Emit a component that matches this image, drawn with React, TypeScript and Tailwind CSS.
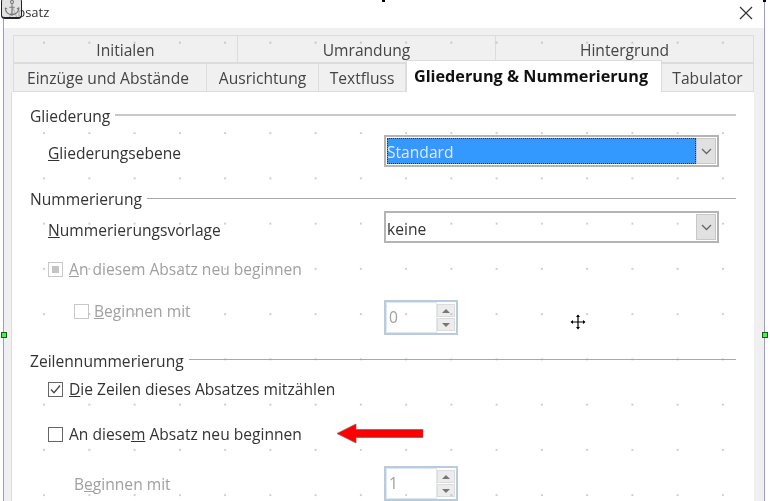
import React from 'react';
import { Anchor } from 'lucide-react';

const Heading = ({ title, line, text = 'pt-[4px]' }: { title: string; line: string; text?: string }) => (
  <div className="flex items-center h-5 gap-[5px]">
    <span className={`whitespace-nowrap ${text}`}>{title}</span>
    <div className={`flex-1 ${line}`} />
  </div>
);

const Select = ({ value, active }: { value: string; active?: boolean }) => (
  <div className="flex w-[335px] h-[32px] border-2 border-[#b4b4b4] bg-white p-px">
    <div className={`flex-1 flex items-center ${active ? 'pt-[4px] bg-[#3399ff] text-[#d9ecff] outline-1 outline-dotted outline-[#333] -outline-offset-1' : 'pt-[6px] text-[#333]'}`}>
      {value}
    </div>
    <div className="w-5 flex items-center justify-center bg-[#e1e1e1] border border-[#c8c8c8]">
      <svg width="11" height="7" viewBox="0 0 11 7">
        <path d="M1 1l4.500 4.500L10 1" stroke="#666" strokeWidth="1.300" fill="none" />
      </svg>
    </div>
  </div>
);

const Spin = ({ value }: { value: string }) => (
  <div className="flex w-[74px] h-[35px] border-2 border-[#b9cbdf] bg-white">
    <div className="flex-1 flex items-center pl-[2px] text-[#a0a0a0] border border-[#dbe9f5]">{value}</div>
    <div className="w-[18px] my-[2px] mr-[1px] flex flex-col gap-px">
      <div className="flex-1 flex items-center justify-center bg-[#ececec] border border-[#dcdcdc]">
        <div className="w-0 h-0 border-x-[4px] border-x-transparent border-b-[4px] border-b-[#777]" />
      </div>
      <div className="flex-1 flex items-center justify-center bg-[#ececec] border border-[#dcdcdc]">
        <div className="w-0 h-0 border-x-[4px] border-x-transparent border-t-[4px] border-t-[#777]" />
      </div>
    </div>
  </div>
);

const Tab = ({ label, className }: { label: string; className: string }) => (
  <div className={`flex items-center justify-center border border-[#dcdcdc] bg-[#f0f0f0] text-[#444] whitespace-nowrap ${className}`}>
    {label}
  </div>
);

export default function App() {
  return (
    <div className="relative w-[770px] h-[501px] overflow-hidden bg-white text-[#333] text-[15.6px] blur-[0.35px] font-['Open_Sans','Noto_Sans',sans-serif]">
      {/* titelleiste */}
      <div className="h-7 flex items-center justify-between pl-[9px] pr-[17px]">
        <span className="text-[13px] text-[#333] -mt-[2px]">Absatz</span>
        <svg width="14" height="14" viewBox="0 0 14 14" className="-mt-[3px]">
          <path d="M1 1l12 12M13 1L1 13" stroke="#333" strokeWidth="1.2" fill="none" />
        </svg>
      </div>

      <div className="ml-[4px] mr-[5px] h-[473px] bg-[#f0f0f0] pt-[7px]">
        {/* reiter */}
        <div className="flex h-[28px] ml-[9px] mr-[11px]">
          <Tab label="Initialen" className="w-[225px] pt-[4px]" />
          <Tab label="Umrandung" className="w-[258px] pt-[4px] border-l-0" />
          <Tab label="Hintergrund" className="flex-1 pt-[4px] border-l-0" />
        </div>
        <div className="flex h-[29px] ml-[9px] mr-[11px] relative z-10">
          <Tab label="Einzüge und Abstände" className="w-[194px] pt-[2px] pr-[4px]" />
          <Tab label="Ausrichtung" className="w-[112px] pt-[2px] border-l-0" />
          <Tab label="Textfluss" className="w-[87px] pt-[2px] border-l-0" />
          <div className="w-[256px] h-[32px] -mt-[3px] pr-[6px] flex items-center justify-center bg-white border border-b-0 border-[#dcdcdc] font-bold text-[16.2px] text-[#111] whitespace-nowrap">
            Gliederung &amp; Nummerierung
          </div>
          <Tab label="Tabulator" className="flex-1 pt-[2px] border-l-0" />
        </div>

        {/* seite */}
        <div className="ml-[7px] mr-[11px] h-[409px] bg-white border-l border-[#dcdcdc] pt-[14px] pl-[18px] pr-[18px]">
          <Heading title="Gliederung" text="pt-[2px]" line="h-[2px] -mt-[3px] bg-[#c8c8c8]" />
          <div className="mt-[9px] ml-[18px] flex items-center">
            <div className="w-[336px] pt-[6px]"><u>G</u>liederungsebene</div>
            <Select value="Standard" active />
          </div>

          <div className="mt-[21px]"><Heading title="Nummerierung" line="h-px bg-[#a8a8a8]" /></div>
          <div className="mt-[3px] ml-[18px] flex items-center">
            <div className="w-[336px] pt-[8px]"><u>N</u>ummerierungsvorlage</div>
            <Select value="keine" />
          </div>

          <div className="mt-[16px] ml-[18px] h-5 flex items-center gap-[6px] text-[#a0a0a0]">
            <div className="w-[15px] h-[15px] border border-[#c8c8c8] p-[3px]">
              <div className="w-full h-full bg-[#c4c4c4]" />
            </div>
            <span className="pt-[2px]"><u>A</u>n diesem Absatz neu beginnen</span>
          </div>
          <div className="mt-[21px] ml-[18px] flex items-start">
            <div className="w-[336px] h-[22px] pl-[26px] flex items-center gap-[5px] text-[#a0a0a0]">
              <div className="w-[15px] h-[15px] border border-[#c8c8c8]" />
              <span className="pt-[2px]"><u>B</u>eginnen mit</span>
            </div>
            <Spin value="0" />
          </div>

          <div className="mt-[15px]"><Heading title="Zeilennummerierung" line="h-px -mt-[2px] bg-[#a8a8a8]" /></div>
          <div className="mt-[9px] ml-[18px] h-5 flex items-center gap-[6px]">
            <div className="w-[15px] h-[15px] border border-[#666] flex items-center justify-center">
              <svg width="13" height="13" viewBox="0 0 13 13">
                <path d="M2 6.500l3 3.200L11 2.500" stroke="#444" strokeWidth="1.3" fill="none" />
              </svg>
            </div>
            <span className="pt-[2px]"><u>D</u>ie Zeilen dieses Absatzes mitzählen</span>
          </div>
          <div className="mt-[25px] ml-[18px] h-5 flex items-center gap-[6px]">
            <div className="w-[15px] h-[15px] border border-[#666]" />
            <span className="pt-[2px]">An diese<u>m</u> Absatz neu beginnen</span>
          </div>
          <div className="mt-[22px] ml-[18px] flex items-center">
            <div className="w-[336px] pl-[26px] pt-[2px] text-[#a0a0a0]">B<u>e</u>ginnen mit</div>
            <Spin value="1" />
          </div>
        </div>
      </div>

      {/* raster */}
      <div className="absolute left-[12px] top-[34px] right-[16px] bottom-0 pointer-events-none bg-[radial-gradient(circle,#a0a0a0_0.55px,transparent_0.85px)] bg-[size:45.25px_45.25px] bg-[position:9.5px_-14px]" />

      {/* rahmen und griffe */}
      <div className="absolute left-[3px] top-[19px] bottom-0 w-px bg-[#9a9ad8]" />
      <div className="absolute left-[764px] top-0 bottom-0 w-px bg-[#9a9ad8]" />
      <div className="absolute left-[382px] top-0 w-[3px] h-[2px] bg-black" />
      <div className="absolute left-[763px] top-0 w-[3px] h-[2px] bg-black" />
      <div className="absolute left-[1px] top-[332px] w-[6px] h-[6px] bg-[#33ff33] border border-[#225522]" />
      <div className="absolute left-[762px] top-[332px] w-[6px] h-[6px] bg-[#33ff33] border border-[#225522]" />

      {/* anker */}
      <div className="absolute left-[1px] -top-[2px] w-[21px] h-[21px] rounded-[4px] bg-[#d8d8d8]/75 border-b-2 border-r border-l border-[#222] flex items-center justify-center">
        <Anchor size={18} strokeWidth={1.4} className="text-[#777]" />
      </div>

      {/* cursor */}
      <svg width="16" height="16" viewBox="0 0 16 16" className="absolute left-[570px] top-[314px]">
        <path d="M8 1.500v13M1.500 8h13" stroke="#000" strokeWidth="1.2" />
        <path d="M8 0.500l2 2.500H6zM8 15.500l2-2.500H6zM0.500 8L3 6v4zM15.500 8L13 6v4z" fill="#000" />
      </svg>

      {/* pfeil */}
      <svg width="88" height="21" viewBox="0 0 88 21" className="absolute left-[336px] top-[423px]">
        <path d="M1 10.500L20 1v5.500h67v8H20V20z" fill="#ff0000" stroke="#8a5a5a" strokeWidth="0.7" />
      </svg>
    </div>
  );
}
